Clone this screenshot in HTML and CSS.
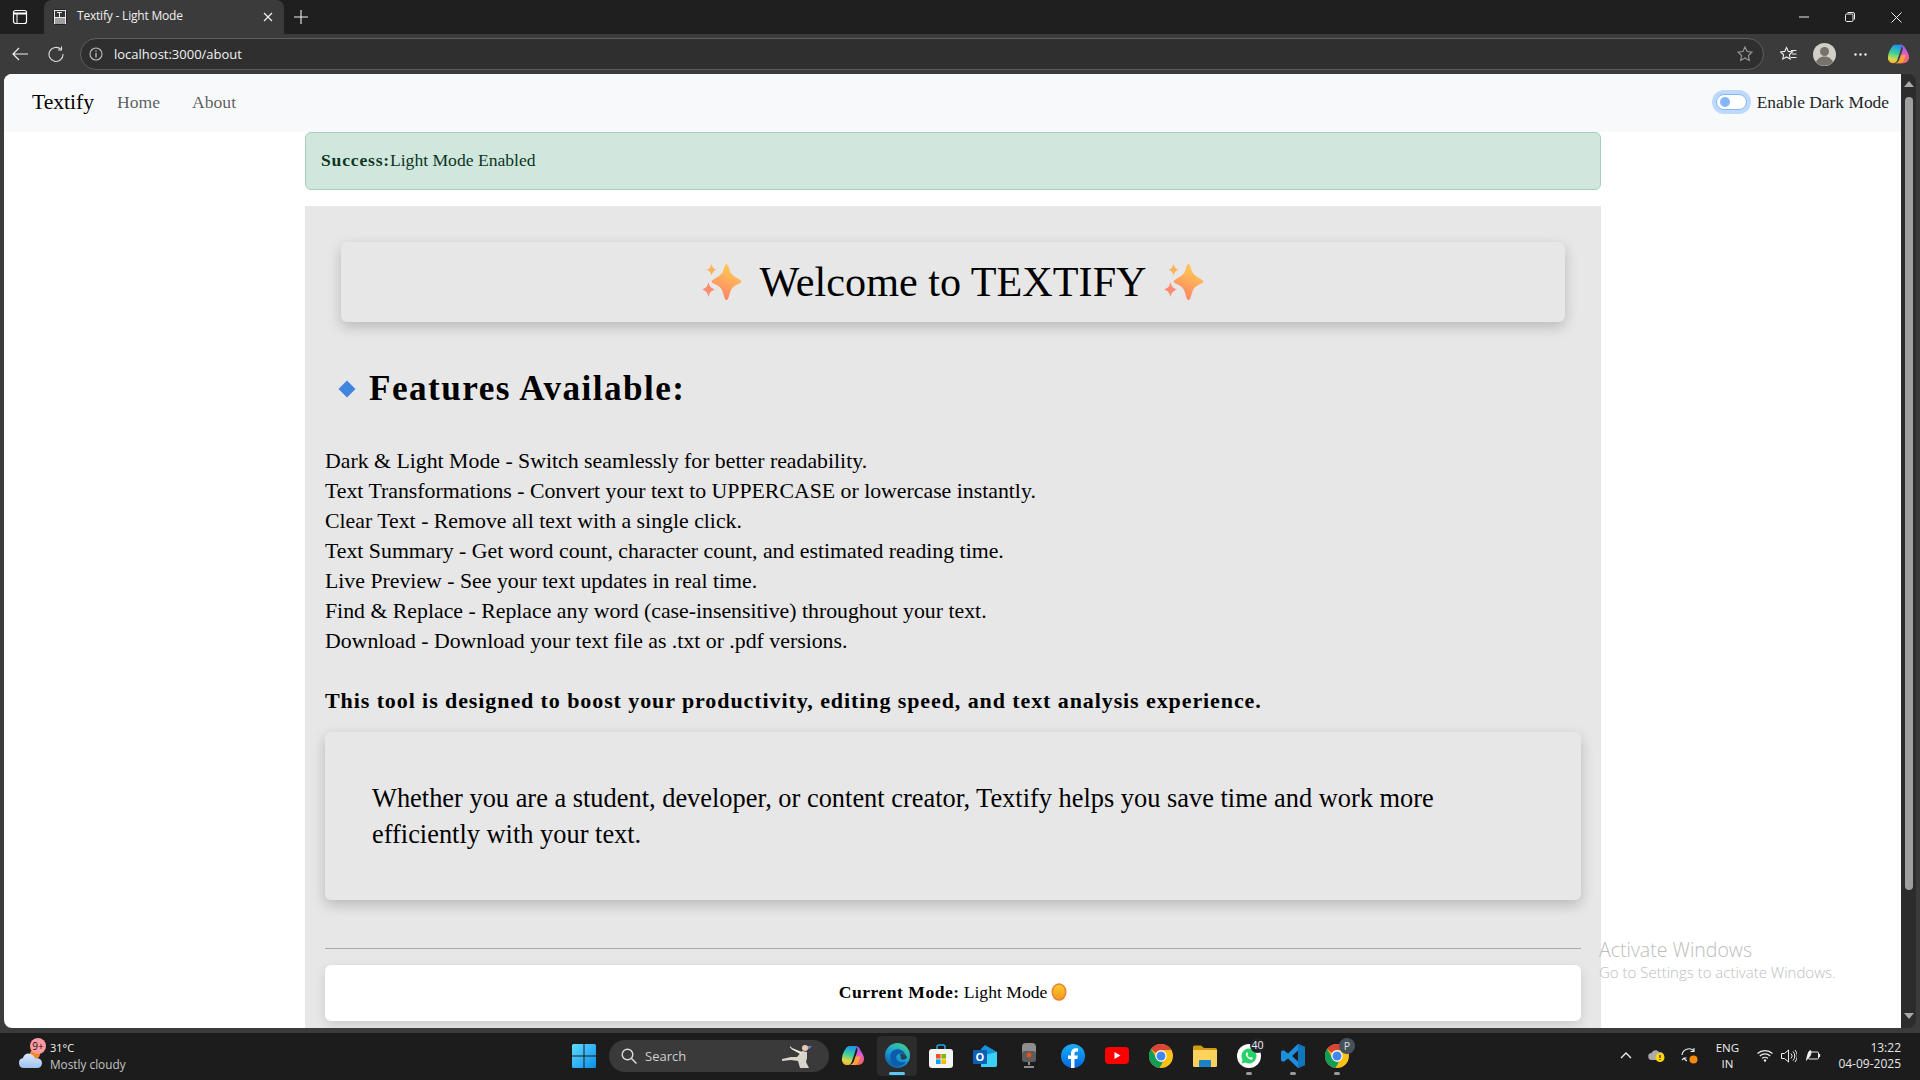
FILE: index.html
```html
<!DOCTYPE html>
<html lang="en">
<head>
<meta charset="utf-8">
<title>Textify - Light Mode</title>
<link rel="stylesheet" href="styles.css">
</head>
<body>
<svg class="defs" width="0" height="0" aria-hidden="true">
  <defs>
    <linearGradient id="spark" x1="0.7" y1="0" x2="0.3" y2="1"><stop offset="0" stop-color="#ffcf52"/><stop offset="1" stop-color="#ff8068"/></linearGradient>
    <linearGradient id="copL" x1="0.6" y1="0" x2="0.4" y2="1"><stop offset="0" stop-color="#1f8ff0"/><stop offset=".45" stop-color="#38cf9a"/><stop offset=".8" stop-color="#d7d94a"/><stop offset="1" stop-color="#f7b030"/></linearGradient>
    <linearGradient id="copR" x1="0.5" y1="0" x2="0.5" y2="1"><stop offset="0" stop-color="#8a5cf0"/><stop offset=".5" stop-color="#e45cc8"/><stop offset="1" stop-color="#f5694a"/></linearGradient>
    <linearGradient id="edge" x1="0.8" y1="0" x2="0.2" y2="1"><stop offset="0" stop-color="#3fd08a"/><stop offset=".5" stop-color="#1c9fd6"/><stop offset="1" stop-color="#0c59a4"/></linearGradient>
    <linearGradient id="fb" x1="0" y1="0" x2="0" y2="1"><stop offset="0" stop-color="#19aff5"/><stop offset="1" stop-color="#0566e0"/></linearGradient>
    <linearGradient id="win" x1="0" y1="0" x2="1" y2="1"><stop offset="0" stop-color="#5fdcff"/><stop offset="1" stop-color="#0a8de8"/></linearGradient>
    <linearGradient id="cloud" x1="0" y1="0" x2="0" y2="1"><stop offset="0" stop-color="#dbe8fb"/><stop offset="1" stop-color="#9dc2f2"/></linearGradient>
    <linearGradient id="sun" x1="0" y1="0" x2="0" y2="1"><stop offset="0" stop-color="#fdc92e"/><stop offset="1" stop-color="#f29a1f"/></linearGradient>
    <symbol id="sparkles" viewBox="0 0 40 36">
      <path fill="url(#spark)" d="M24.500 0c1.500 0 2 2.500 3 6 1 3.500 3 5.500 10 9.500 2.500 1.500 2.500 3 0 4-6.500 2.500-8.500 5-10 11-1 3.500-1.500 5.500-3 5.500s-2-2-3-5.500c-1.500-6-3.500-8.500-10-11-2.500-1-2.500-2.500 0-4 7-4 9-6 10-9.500 1-3.500 1.500-6 3-6z"/>
      <path fill="#fbb35a" d="M9.500 0c1 3.500 2 5 5 5.800-3 .8-4 2.500-5 5.700-1-3.200-2-4.900-5-5.700 3-.8 4-2.300 5-5.800z"/>
      <path fill="#ff8b70" d="M6.500 18c1 4.500 2.500 6 6.500 7.500-4 1.500-5.500 3-6.500 7.500-1-4.500-2.500-6-6.500-7.500 4-1.500 5.500-3 6.500-7.500z"/>
    </symbol>
    <symbol id="copilot" viewBox="0 0 24 24">
      <path fill="url(#copL)" d="M8 2h8l-3 10-2.500 7c-.8 2-2.500 3-4.500 3-3.500 0-6-3-5.500-7C1 10 3 7 5 4 5.800 2.800 6.800 2 8 2z"/>
      <path fill="url(#copR)" d="M14 2c2.500 0 4 1 5 3 2 4 4.500 7 4.500 10.500 0 4-3 6.500-6 6.500H8c2.500 0 4-1.500 5-4l3.500-10.500c.5-1.800 0-4-2.500-5.500z"/>
      <path fill="#fca03a" d="M8 22c2.500 0 4-1.500 5-4l1.700-5H20l-2.500 6.500c-.7 1.700-2 2.500-4 2.500z"/>
    </symbol>
    <symbol id="chrome" viewBox="0 0 24 24">
      <circle cx="12" cy="12" r="12" fill="#fbc116"/>
      <path fill="#db4437" d="M12 0a12 12 0 0 1 10.400 6H12a6 6 0 0 0-5.300 3.100L2.200 4.900A12 12 0 0 1 12 0z"/>
      <path fill="#0f9d58" d="M2.200 4.900l4.700 8A6 6 0 0 0 14 17.700L10.500 23.900A12 12 0 0 1 2.200 4.900z"/>
      <circle cx="12" cy="12" r="5.700" fill="#fff"/>
      <circle cx="12" cy="12" r="4.500" fill="#4285f4"/>
    </symbol>
  </defs>
</svg>

<div class="tabstrip">
  <svg class="tab-side" width="16" height="16" viewBox="0 0 16 16"><rect x="1.500" y="1.500" width="13" height="13" rx="2" fill="none" stroke="#fff" stroke-width="1.200"/><path d="M1.500 4.500h13" stroke="#fff" stroke-width="2"/><path d="M5 4.500v10" stroke="#fff" stroke-width="1"/></svg>
  <div class="tab">
    <svg class="favicon" width="14" height="16" viewBox="0 0 14 16"><rect x=".5" y=".5" width="13" height="15" rx="1" fill="#e8e8e8" stroke="#222"/><rect x="2" y="2" width="10" height="6" fill="#333"/><path d="M2 10h10M2 12h10M2 14h10" stroke="#555" stroke-width="1"/><path d="M4 3.500h5M6.500 3.500V8" stroke="#eee" stroke-width="1"/></svg>
    <span class="tab-title">Textify - Light Mode</span>
    <svg class="tab-close" width="10" height="10" viewBox="0 0 10 10"><path d="M1 1l8 8M9 1l-8 8" stroke="#eee" stroke-width="1.200"/></svg>
  </div>
  <svg class="tab-new" width="14" height="14" viewBox="0 0 14 14"><path d="M7 0v14M0 7h14" stroke="#eee" stroke-width="1.100"/></svg>
  <div class="win-controls">
    <svg width="10" height="10" viewBox="0 0 10 10"><path d="M0 5h10" stroke="#eee"/></svg>
    <svg width="10" height="10" viewBox="0 0 10 10"><rect x=".5" y="2" width="7.500" height="7.500" rx="1.200" fill="none" stroke="#eee"/><path d="M2.500 .5h5.500a1.500 1.500 0 0 1 1.500 1.500v5.500" fill="none" stroke="#eee"/></svg>
    <svg width="11" height="11" viewBox="0 0 11 11"><path d="M.5.500l10 10M10.500.5l-10 10" stroke="#eee"/></svg>
  </div>
</div>

<div class="toolbar">
  <svg class="tb-back" width="16" height="14" viewBox="0 0 16 14"><path d="M16 7H1M7 1L1 7l6 6" fill="none" stroke="#eee" stroke-width="1.200"/></svg>
  <svg class="tb-reload" width="16" height="16" viewBox="0 0 16 16"><path d="M13 3.500A7 7 0 1 0 15 8" fill="none" stroke="#ddd" stroke-width="1.100"/><path d="M13.500 .5v3.500H10" fill="none" stroke="#ddd" stroke-width="1.100"/></svg>
  <div class="address">
    <svg width="14" height="14" viewBox="0 0 14 14"><circle cx="7" cy="7" r="6" fill="none" stroke="#bbb" stroke-width="1.100"/><path d="M7 6v4.500M7 3.500v1.200" stroke="#ccc" stroke-width="1.200"/></svg>
    <span class="url">localhost:3000/about</span>
    <svg class="addr-star" width="16" height="16" viewBox="0 0 16 16"><path d="M8 1l2.100 4.500 4.900.6-3.600 3.400.9 4.900L8 11.900l-4.300 2.500.9-4.900L1 6.100l4.900-.6z" fill="none" stroke="#999" stroke-width="1.100"/></svg>
  </div>
  <div class="tb-actions">
    <svg width="17" height="16" viewBox="0 0 17 16"><path d="M6.500 1.500l1.800 3.900 4.200.5-3.100 2.900.8 4.200-3.700-2.100-3.700 2.100.8-4.200L.5 5.900l4.200-.5z" fill="none" stroke="#eee" stroke-width="1.100"/><path d="M11 4.500h5.500M12 8h4.500M11 11.500h5.500" stroke="#eee" stroke-width="1"/></svg>
    <svg class="tb-avatar" width="23" height="23" viewBox="0 0 23 23"><circle cx="11.500" cy="11.500" r="11.500" fill="#d2cfc9"/><circle cx="11.500" cy="8.500" r="4.500" fill="#77736c"/><path d="M3 19c2-4 5-5.500 8.500-5.500S18 15 20 19a11.500 11.500 0 0 1-17 0z" fill="#77736c"/></svg>
    <svg width="13" height="3" viewBox="0 0 13 3"><circle cx="1.500" cy="1.500" r="1.200" fill="#eee"/><circle cx="6.500" cy="1.500" r="1.200" fill="#eee"/><circle cx="11.500" cy="1.500" r="1.200" fill="#eee"/></svg>
    <svg class="tb-copilot" width="23" height="22"><use href="#copilot"/></svg>
  </div>
</div>

<div class="viewport-row">
  <div class="page">
    <nav class="navbar">
      <a class="brand">Textify</a>
      <a class="nav-link nav-home">Home</a>
      <a class="nav-link">About</a>
      <div class="switch-wrap">
        <span class="switch"><span class="knob"></span></span>
        <span class="switch-label">Enable Dark Mode</span>
      </div>
    </nav>
    <main class="main">
      <div class="alert"><strong class="alert-strong">Success:</strong>Light Mode Enabled</div>
      <section class="panel">
        <div class="welcome">
          <svg class="sparkle" width="40" height="36"><use href="#sparkles"/></svg>
          <h1 class="welcome-title">Welcome to TEXTIFY</h1>
          <svg class="sparkle" width="40" height="36"><use href="#sparkles"/></svg>
        </div>
        <h2 class="features-title">
          <svg class="diamond" width="18" height="18" viewBox="0 0 18 18"><path d="M9 .5L17.500 9 9 17.500.5 9z" fill="#4285e0"/></svg>
          Features Available:
        </h2>
        <div class="feature-list">
          <div>Dark &amp; Light Mode - Switch seamlessly for better readability.</div>
          <div>Text Transformations - Convert your text to UPPERCASE or lowercase instantly.</div>
          <div>Clear Text - Remove all text with a single click.</div>
          <div>Text Summary - Get word count, character count, and estimated reading time.</div>
          <div>Live Preview - See your text updates in real time.</div>
          <div>Find &amp; Replace - Replace any word (case-insensitive) throughout your text.</div>
          <div>Download - Download your text file as .txt or .pdf versions.</div>
        </div>
        <p class="tool-note">This tool is designed to boost your productivity, editing speed, and text analysis experience.</p>
        <div class="quote">Whether you are a student, developer, or content creator, Textify helps you save time and work more efficiently with your text.</div>
        <hr class="rule">
        <div class="mode-box"><strong class="mode-strong">Current Mode:</strong> Light Mode
          <svg class="sun" width="16" height="18" viewBox="0 0 16 18"><ellipse cx="8" cy="9" rx="7.500" ry="8.800" fill="#ef7d2a"/><ellipse cx="8" cy="9" rx="6" ry="7.300" fill="url(#sun)"/></svg>
        </div>
      </section>
    </main>
    <div class="activate">
      <div class="activate-title">Activate Windows</div>
      <div class="activate-sub">Go to Settings to activate Windows.</div>
    </div>
  </div>
  <div class="scrollbar">
    <svg width="10" height="6" viewBox="0 0 10 6"><path d="M5 0l5 6H0z" fill="#aaa"/></svg>
    <div class="thumb"></div>
    <svg width="10" height="6" viewBox="0 0 10 6"><path d="M5 6L0 0h10z" fill="#aaa"/></svg>
  </div>
</div>

<footer class="taskbar">
  <div class="tb-weather">
    <svg class="weather-icon" width="26" height="22" viewBox="0 0 26 22"><circle cx="17" cy="7" r="5" fill="#f08a24"/><path d="M6 21a5 5 0 0 1-1-9.900C6 7 10 5.500 13.500 7.500c2 1 3 2.500 3.500 4 3-1 7 .5 7 4.500 0 3-2 5-5 5z" fill="url(#cloud)"/></svg>
    <span class="weather-badge">9+</span>
    <div class="weather-text"><div class="temp">31°C</div><div class="cond">Mostly cloudy</div></div>
  </div>
  <div class="tb-icons">
    <svg class="win-logo" width="24" height="24" viewBox="0 0 24 24"><path fill="url(#win)" d="M0 1.500A1.500 1.500 0 0 1 1.500 0h10v11.500H0zM12.500 0h10A1.500 1.500 0 0 1 24 1.500v10H12.500zM0 12.500h11.500V24h-10A1.500 1.500 0 0 1 0 22.500zM12.500 12.500H24v10a1.500 1.500 0 0 1-1.500 1.500h-10z"/></svg>
    <div class="search">
      <svg width="16" height="16" viewBox="0 0 16 16"><circle cx="6.500" cy="6.500" r="5.300" fill="none" stroke="#ddd" stroke-width="1.400"/><path d="M10.500 10.500l5 5" stroke="#ddd" stroke-width="1.400"/></svg>
      <span class="search-label">Search</span>
      <svg class="ninja" width="33" height="26" viewBox="0 0 33 26"><path d="M24 3h8l-3 3-5 0z" fill="#7b79d8"/><circle cx="25" cy="5" r="3" fill="#e9c7ae"/><path d="M22 8l5 1 0 6-1 4 3 6h-9l-2-7-7-1-9 1 0-2 9-2 6 0z" fill="#d8d4cc"/><path d="M22 9L12 5l-2-2 0 1.500 2 2 9 5z" fill="#e9e4da"/></svg>
    </div>
    <div class="app-row">
      <span class="app"><svg width="24" height="23"><use href="#copilot"/></svg></span>
      <span class="app app-active">
        <svg width="25" height="25" viewBox="0 0 24 24"><circle cx="12" cy="12" r="12" fill="url(#edge)"/><path d="M5 13c0-5 4-7 7-7 4 0 7 2.500 8 6-2-2-5-2.500-7-1.500-3 1.500-3 5 0 7 2 1.300 5 1.300 7.500 0-2 3-5 5-8.500 5C7 22.500 5 18 5 13z" fill="#0c5cab"/><path d="M14 11c3-1 6 0 7 2.500 0 1.500-2 2.500-4 2.500-1 0-2-1-2-2 .5-1 0-2-1-3z" fill="#1c1c1c" opacity=".7"/></svg>
        <i class="active-bar"></i>
      </span>
      <span class="app"><svg width="24" height="24" viewBox="0 0 24 24"><path d="M8 6V3a2 2 0 0 1 2-2h4a2 2 0 0 1 2 2v3" fill="none" stroke="#23a4dd" stroke-width="1.600"/><rect y="5" width="24" height="19" rx="3" fill="#f4f4f4"/><rect x="7" y="10" width="4.600" height="4.600" fill="#f25022"/><rect x="12.400" y="10" width="4.600" height="4.600" fill="#7fba00"/><rect x="7" y="15.400" width="4.600" height="4.600" fill="#00a4ef"/><rect x="12.400" y="15.400" width="4.600" height="4.600" fill="#ffb900"/></svg></span>
      <span class="app"><svg width="24" height="24" viewBox="0 0 24 24"><path d="M12 1l12 7v13a2 2 0 0 1-2 2H8V5z" fill="#1594dc"/><path d="M8 12l16-4v13a2 2 0 0 1-2 2H8z" fill="#3cd0f5"/><rect y="6" width="14" height="14" rx="1" fill="#0b5fb8"/><text class="outlook-o" x="7" y="17">O</text></svg></span>
      <span class="app"><svg width="16" height="25" viewBox="0 0 16 25"><rect x="1" y="0" width="14" height="19" rx="4" fill="#8e8e8e"/><rect x="1" y="8" width="14" height="11" rx="3" fill="#5d5d5d"/><circle cx="8" cy="12" r="2.500" fill="#e2521d"/><path d="M8 19v3M3 24h10" stroke="#8e8e8e" stroke-width="2"/></svg></span>
      <span class="app"><svg width="24" height="24" viewBox="0 0 24 24"><circle cx="12" cy="12" r="12" fill="url(#fb)"/><path d="M10 24v-9H7v-3.500h3V9c0-3 2-4.700 4.700-4.700 1.300 0 2.300.2 2.300.2v3h-1.500c-1.500 0-2 .9-2 1.900v2.100h3.400l-.6 3.500h-2.800v9z" fill="#fff"/></svg></span>
      <span class="app"><svg width="24" height="17" viewBox="0 0 24 17"><rect width="24" height="17" rx="4" fill="#f00"/><path d="M9.500 5l6 3.500-6 3.500z" fill="#fff"/></svg></span>
      <span class="app"><svg width="24" height="24"><use href="#chrome"/></svg></span>
      <span class="app"><svg width="24" height="22" viewBox="0 0 24 22"><path d="M0 2a1.500 1.500 0 0 1 1.500-1.500H8L11 3h11.500A1.500 1.500 0 0 1 24 4.500V8H0z" fill="#d19a13"/><path d="M0 5h24v15.500a1.500 1.500 0 0 1-1.500 1.500h-21A1.500 1.500 0 0 1 0 20.500z" fill="#fcd25c"/><rect x="6" y="15" width="12" height="7" rx="1" fill="#1b82c8"/></svg></span>
      <span class="app app-open">
        <svg width="24" height="24" viewBox="0 0 24 24"><circle cx="12" cy="12" r="12" fill="#fff"/><path d="M12 4.500a7.500 7.500 0 0 0-6.400 11.400L4.500 19.500l3.700-1A7.500 7.500 0 1 0 12 4.500z" fill="#25d366"/><path d="M9.500 8.500c-1 1-1 2.500.5 4.500s3.500 3 5 2.500l1-1.500-2-1-1 .8c-1-.5-2-1.500-2.500-2.500l.7-1-.8-2z" fill="#fff"/></svg>
        <i class="count-badge">40</i>
        <i class="open-bar"></i>
      </span>
      <span class="app app-open">
        <svg width="24" height="24" viewBox="0 0 24 24"><path d="M17 0l7 3v18l-7 3L7 14.500l-4.500 3.500L0 16.500v-9L2.500 6 7 9.500zM17 6.500l-6 5.500 6 5.500z" fill="#1b8fdc"/><path d="M17 0l7 3v18l-7 3z" fill="#0f75bd"/></svg>
        <i class="open-bar"></i>
      </span>
      <span class="app app-open">
        <svg width="24" height="24"><use href="#chrome"/></svg>
        <i class="profile-badge">P</i>
        <i class="open-bar"></i>
      </span>
    </div>
  </div>
  <div class="tray">
    <svg width="12" height="7" viewBox="0 0 12 7"><path d="M1 6l5-5 5 5" fill="none" stroke="#eee" stroke-width="1.400"/></svg>
    <svg class="tray-cloud" width="17" height="13" viewBox="0 0 17 13"><path d="M4 11a3.500 3.500 0 0 1-.5-7C4.500 1 9 0 11 3c2.500-.5 5 1 5 4s-2 4-4 4z" fill="#aaa"/><circle cx="12" cy="8.500" r="4.500" fill="#ffd60a"/><path d="M12 6v3M12 10v1" stroke="#222" stroke-width="1.200"/></svg>
    <svg class="tray-sync" width="17" height="17" viewBox="0 0 17 17"><path d="M1 8a7 7 0 0 1 12-4M13 1v3.500H9.500M1 13l2-2h2.500M3 11a6 6 0 0 0 3 3" fill="none" stroke="#eee" stroke-width="1.100"/><circle cx="12.500" cy="12.500" r="4" fill="#f7890d"/></svg>
    <div class="lang"><div>ENG</div><div>IN</div></div>
    <svg class="tray-wifi" width="16" height="13" viewBox="0 0 16 13"><path d="M.5 4.500a11 11 0 0 1 15 0M2.800 7a7.500 7.500 0 0 1 10.400 0M5.200 9.500a4 4 0 0 1 5.600 0" fill="none" stroke="#eee" stroke-width="1.200"/><circle cx="8" cy="11.500" r="1.200" fill="#eee"/></svg>
    <svg class="tray-vol" width="16" height="14" viewBox="0 0 16 14"><path d="M.5 4.500h3L7.500 1v12l-4-3.500h-3z" fill="none" stroke="#eee"/><path d="M10 4.500a3.500 3.500 0 0 1 0 5M12 2.500a6.500 6.500 0 0 1 0 9M14 1a9 9 0 0 1 0 12" fill="none" stroke="#eee"/></svg>
    <svg class="tray-bat" width="16" height="13" viewBox="0 0 16 13"><rect x="3.500" y="3" width="10" height="7" rx="1" fill="none" stroke="#eee"/><path d="M14.500 5v3" stroke="#eee" stroke-width="1.300"/><path d="M1 11C2 6 3 2 5.500 1c1 1 1.500 3 0 6L1 12z" fill="#eee"/></svg>
    <div class="clock"><div>13:22</div><div>04-09-2025</div></div>
  </div>
</footer>
</body>
</html>
```

FILE: styles.css
```css
* { box-sizing: border-box; }
html, body { margin: 0; height: 100%; }
body {
  width: 1920px;
  height: 1080px;
  overflow: hidden;
  display: flex;
  flex-direction: column;
  background: #3b3b3b;
  font-family: "Liberation Serif", serif;
  color: #000;
}
.defs { position: absolute; }
svg { display: block; flex: none; }

/* browser tab strip */
.tabstrip {
  height: 34px;
  background: #1f1f1f;
  display: flex;
  align-items: center;
  font-family: "Open Sans", "Noto Sans", sans-serif;
}
.tab-side { margin: 0 16px 0 12px; }
.tab {
  width: 240px;
  height: 34px;
  background: #3b3b3b;
  border-radius: 8px 8px 0 0;
  display: flex;
  align-items: center;
  padding: 0 11px 0 9px;
}
.favicon { margin-right: 10px; }
.tab-title { flex: 1; font-size: 12px; line-height: 16px; margin-bottom: 2px; letter-spacing: -0.2px; color: #f0f0f0; }
.tab-new { margin-left: 10px; }
.win-controls {
  margin-left: auto;
  display: flex;
  align-items: center;
  gap: 36px;
  padding-right: 18px;
}

/* browser toolbar */
.toolbar {
  height: 40px;
  background: #3b3b3b;
  display: flex;
  align-items: center;
  font-family: "Open Sans", "Noto Sans", sans-serif;
}
.tb-back { margin-left: 12px; }
.tb-reload { margin-left: 20px; }
.address {
  margin-left: 16px;
  width: 1684px;
  height: 32px;
  border: 1px solid #5e5e5e;
  border-radius: 16px;
  background: #2f2f2f;
  display: flex;
  align-items: center;
  padding: 0 10px 0 8px;
}
.url { margin-left: 11px; flex: 1; font-size: 13px; color: #f2f2f2; }
.tb-actions { margin-left: 16px; display: flex; align-items: center; gap: 18px; }
.tb-avatar { margin-left: -2px; }
.tb-copilot { margin-left: 2px; }

/* viewport */
.viewport-row { height: 954px; display: flex; }
.page {
  position: relative;
  margin-left: 4px;
  width: 1897px;
  height: 954px;
  overflow: hidden;
  background: #fff;
  border-radius: 8px 0 0 8px;
}
.scrollbar {
  width: 15px;
  height: 954px;
  background: #2c2c2c;
  border-radius: 0 8px 8px 0;
  display: flex;
  flex-direction: column;
  align-items: center;
  padding: 7px 0 9px;
}
.thumb { width: 8px; height: 793px; margin: 10px 0 auto; background: #9f9f9f; border-radius: 4px; }

.navbar {
  height: 58px;
  background: #f8f9fa;
  display: flex;
  align-items: center;
  padding: 0 12px 2px 28px;
}
.brand { font-size: 21.600px; margin-right: 23px; }
.nav-link { font-size: 17.600px; color: rgba(0,0,0,.65); margin-right: 32px; }
.switch-wrap { margin-left: auto; display: flex; align-items: center; gap: 10px; }
.switch {
  width: 31px;
  height: 16px;
  border: 1px solid #86b7fe;
  border-radius: 8px;
  background: #fff;
  box-shadow: 0 0 0 4px #bfd9fe;
  display: flex;
  align-items: center;
  padding-left: 3px;
}
.knob { width: 10px; height: 10px; border-radius: 50%; background: #86b7fe; }
.switch-label { font-size: 17.400px; color: #212529; }

.main { width: 1296px; margin-left: 301px; }
.alert {
  height: 58px;
  background: #d1e7dd;
  border: 1px solid #a3cfbb;
  border-radius: 6px;
  color: #0a3622;
  font-size: 17.600px;
  display: flex;
  align-items: center;
  padding: 0 15px 2px;
}
.alert-strong { letter-spacing: .8px; }
.panel {
  margin-top: 16px;
  background: #e7e7e7;
  padding: 36px 20px 40px;
}
.welcome {
  margin: 0 16px;
  height: 80px;
  border-radius: 6px;
  background: #e7e7e7;
  box-shadow: 0 5px 14px rgba(0,0,0,.2);
  display: flex;
  align-items: center;
  justify-content: center;
  gap: 17px;
}
.welcome-title { margin: 0; font-size: 42.200px; font-weight: 400; line-height: 52px; }
.features-title {
  margin: 41px 0 0 13px;
  height: 52px;
  display: flex;
  align-items: center;
  gap: 13px;
  font-size: 35.200px;
  letter-spacing: 1.45px;
  font-weight: 700;
}
.feature-list { margin-top: 31px; font-size: 21.800px; line-height: 30px; }
.tool-note { margin: 30px 0 0; font-size: 22px; line-height: 30px; font-weight: 700; letter-spacing: .91px; }
.quote {
  margin-top: 16px;
  height: 168px;
  padding: 48px 47px;
  border-radius: 6px;
  background: #e7e7e7;
  box-shadow: 0 5px 14px rgba(0,0,0,.2);
  font-size: 26.400px;
  line-height: 36px;
}
.rule { margin: 48px 0 0; border: 0; border-top: 1px solid #aaa; }
.mode-box {
  margin-top: 16px;
  height: 56px;
  background: #fff;
  border-radius: 6px;
  box-shadow: 0 4px 12px rgba(0,0,0,.12);
  display: flex;
  align-items: center;
  justify-content: center;
  gap: 4px;
  padding: 0 0 2px;
  font-size: 17.600px;
}
.mode-strong { letter-spacing: .5px; }
.sun { margin-left: 0; }

.activate {
  position: absolute;
  left: 1595px;
  top: 863px;
  color: #bdbdbd;
  font-family: "Open Sans", "Noto Sans", sans-serif;
}
.activate-title { font-size: 19.500px; line-height: 26px; font-weight: 300; }
.activate-sub { font-size: 15px; line-height: 19px; font-weight: 300; }

/* windows taskbar */
.taskbar {
  margin-top: 5px;
  height: 47px;
  padding-bottom: 2px;
  background: #1c1c1c;
  display: flex;
  align-items: center;
  font-family: "Open Sans", "Noto Sans", sans-serif;
  color: #eee;
}
.tb-weather { position: relative; width: 572px; height: 45px; display: flex; align-items: center; padding-left: 18px; }
.weather-icon { margin-top: 4px; }
.weather-badge {
  position: absolute;
  left: 30px;
  top: 5px;
  width: 16px;
  height: 16px;
  border-radius: 50%;
  background: #ff9aa2;
  color: #111;
  font-size: 10px;
  line-height: 16px;
  text-align: center;
}
.weather-text { margin-left: 6px; font-size: 11px; line-height: 16px; }
.temp { color: #f2f2f2; }
.cond { color: #c4c4c4; font-size: 11.800px; }
.tb-icons { display: flex; align-items: center; }
.search {
  margin-left: 13px;
  width: 220px;
  height: 32px;
  border-radius: 16px;
  background: #3a3a3a;
  display: flex;
  align-items: center;
  padding: 0 16px 0 12px;
}
.search-label { margin-left: 8px; font-size: 13px; color: #cfcfcf; flex: 1; }
.app-row { margin-left: 2px; display: flex; align-items: center; }
.app {
  position: relative;
  width: 44px;
  height: 40px;
  display: flex;
  align-items: center;
  justify-content: center;
}
.app-active { width: 40px; margin: 0 2px; background: #2c2c2c; border-radius: 4px; }
.active-bar {
  position: absolute;
  left: 12px;
  bottom: 1px;
  width: 16px;
  height: 3px;
  border-radius: 2px;
  background: #5cc6f5;
}
.open-bar {
  position: absolute;
  left: 19px;
  bottom: 1px;
  width: 6px;
  height: 3px;
  border-radius: 2px;
  background: #9a9a9a;
}
.count-badge {
  position: absolute;
  left: 23px;
  top: 2px;
  width: 15px;
  height: 15px;
  border-radius: 50%;
  background: #23232b;
  color: #eee;
  font-size: 10.500px;
  font-style: normal;
  line-height: 15px;
  text-align: center;
}
.profile-badge {
  position: absolute;
  left: 24px;
  top: 2px;
  width: 16px;
  height: 16px;
  border-radius: 50%;
  background: #45525e;
  color: #ddd;
  font-size: 10.500px;
  font-style: normal;
  line-height: 16px;
  text-align: center;
}
.outlook-o { font-family: "Open Sans", sans-serif; font-size: 11px; font-weight: 700; fill: #fff; text-anchor: middle; }
.tray { margin-left: auto; display: flex; align-items: center; padding-right: 19px; }
.tray-cloud { margin-left: 16px; }
.tray-sync { margin-left: 16px; }
.lang { margin-left: 14px; width: 30px; text-align: center; font-size: 11.500px; line-height: 16px; color: #eee; }
.tray-wifi { margin-left: 15px; }
.tray-vol { margin-left: 8px; }
.tray-bat { margin-left: 8px; }
.clock { margin-left: 17px; text-align: right; font-size: 12px; line-height: 16px; color: #e6e6e6; }
```
